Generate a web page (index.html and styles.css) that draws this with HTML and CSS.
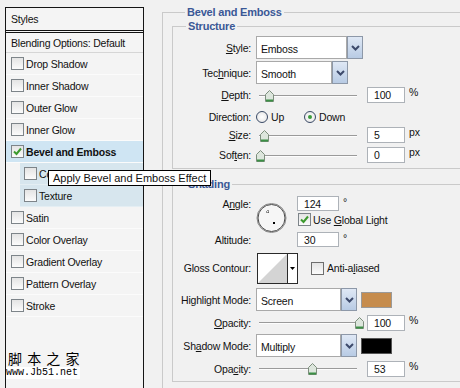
FILE: index.html
```html
<!DOCTYPE html>
<html lang="en">
<head>
    <meta charset="UTF-8">
    <title>Layer Style - Bevel and Emboss</title>
    <link rel="stylesheet" href="styles.css">
</head>
<body>
    <div class="dialog">
        <aside class="styles-panel">
            <div class="panel-head">Styles</div>
            <div class="panel-row blend">Blending Options: Default</div>
            <div class="panel-row"><span class="cb"></span>Drop Shadow</div>
            <div class="panel-row"><span class="cb"></span>Inner Shadow</div>
            <div class="panel-row"><span class="cb"></span>Outer Glow</div>
            <div class="panel-row"><span class="cb"></span>Inner Glow</div>
            <div class="panel-row active">
                <span class="cb"><svg width="11" height="11" viewBox="0 0 11 11"><path d="M2 5.5 L4.5 8 L9 2.5" fill="none" stroke="#3c9a2e" stroke-width="2"/></svg></span>
                <b>Bevel and Emboss</b>
            </div>
            <div class="panel-row sub"><span class="cb"></span>Contour</div>
            <div class="panel-row sub"><span class="cb"></span>Texture</div>
            <div class="panel-row"><span class="cb"></span>Satin</div>
            <div class="panel-row"><span class="cb"></span>Color Overlay</div>
            <div class="panel-row"><span class="cb"></span>Gradient Overlay</div>
            <div class="panel-row"><span class="cb"></span>Pattern Overlay</div>
            <div class="panel-row"><span class="cb"></span>Stroke</div>
        </aside>

        <main class="options">
            <fieldset class="group outer">
                <legend>Bevel and Emboss</legend>

                <fieldset class="group structure">
                    <legend>Structure</legend>

                    <div class="row tall">
                        <label class="lbl"><u>S</u>tyle:</label>
                        <div class="select w-style"><span class="sel-text">Emboss</span><span class="sel-btn"><svg width="9" height="6" viewBox="0 0 9 6"><path d="M1 1 L4.5 4.5 L8 1" fill="none" stroke="#3d4a6b" stroke-width="2"/></svg></span></div>
                    </div>
                    <div class="row tall">
                        <label class="lbl">Tec<u>h</u>nique:</label>
                        <div class="select w-tech"><span class="sel-text">Smooth</span><span class="sel-btn"><svg width="9" height="6" viewBox="0 0 9 6"><path d="M1 1 L4.5 4.5 L8 1" fill="none" stroke="#3d4a6b" stroke-width="2"/></svg></span></div>
                    </div>
                    <div class="row">
                        <label class="lbl"><u>D</u>epth:</label>
                        <div class="slider"><span class="track"></span><span class="thumb" style="left: 7px"><svg width="9" height="12" viewBox="0 0 9 12"><path d="M0.5 4.5 L4.5 0.5 L8.5 4.5 V11.5 H0.5 Z" fill="#dde6dd" stroke="#7d8e7d"/><path d="M1 10.5 H8" stroke="#3b8f45" stroke-width="2"/></svg></span></div>
                        <span class="num">100</span><span class="unit">%</span>
                    </div>
                    <div class="row dir">
                        <label class="lbl">Direction:</label>
                        <span class="radio"></span><span class="radio-text">Up</span>
                        <span class="radio on"></span><span class="radio-text">Down</span>
                    </div>
                    <div class="row">
                        <label class="lbl"><u>S</u>ize:</label>
                        <div class="slider"><span class="track"></span><span class="thumb" style="left: 2px"><svg width="9" height="12" viewBox="0 0 9 12"><path d="M0.5 4.5 L4.5 0.5 L8.5 4.5 V11.5 H0.5 Z" fill="#dde6dd" stroke="#7d8e7d"/><path d="M1 10.5 H8" stroke="#3b8f45" stroke-width="2"/></svg></span></div>
                        <span class="num">5</span><span class="unit">px</span>
                    </div>
                    <div class="row">
                        <label class="lbl">Sof<u>t</u>en:</label>
                        <div class="slider"><span class="track"></span><span class="thumb" style="left: -2px"><svg width="9" height="12" viewBox="0 0 9 12"><path d="M0.5 4.5 L4.5 0.5 L8.5 4.5 V11.5 H0.5 Z" fill="#dde6dd" stroke="#7d8e7d"/><path d="M1 10.5 H8" stroke="#3b8f45" stroke-width="2"/></svg></span></div>
                        <span class="num">0</span><span class="unit">px</span>
                    </div>
                </fieldset>

                <fieldset class="group shading">
                    <legend>Shading</legend>

                    <div class="angle-block">
                        <label class="lbl a-angle">A<u>n</u>gle:</label>
                        <div class="dial">
                            <svg width="32" height="31" viewBox="0 0 32 31">
                                <circle cx="15.5" cy="15" r="14.5" fill="#f6f6f6" stroke="#8a8a8a" stroke-width="1"/>
                                <circle cx="15.5" cy="15" r="13.5" fill="none" stroke="#4a4a4a" stroke-width="1"/>
                                <path d="M12 7 V11 M10 9 H14" stroke="#333" stroke-width="1" stroke-dasharray="1 1"/>
                                <rect x="17" y="19" width="2" height="2" fill="#000"/>
                            </svg>
                        </div>
                        <div class="a-val"><span class="num wide">124</span><span class="unit">°</span></div>
                        <div class="a-check"><span class="cb"><svg width="11" height="11" viewBox="0 0 11 11"><path d="M2 5.5 L4.5 8 L9 2.5" fill="none" stroke="#3c9a2e" stroke-width="2"/></svg></span><span>Use <u>G</u>lobal Light</span></div>
                        <label class="lbl a-alt">Altitude:</label>
                        <div class="a-alt-val"><span class="num wide">30</span><span class="unit">°</span></div>
                    </div>

                    <div class="row contour-row">
                        <label class="lbl">Gloss Contour:</label>
                        <div class="contour">
                            <svg width="41" height="31" viewBox="0 0 41 31">
                                <rect x="0.5" y="0.5" width="40" height="30" fill="#fff" stroke="#2a2a2a"/>
                                <polygon points="1,30 30,1 30,30" fill="#d4d4d4"/>
                                <path d="M30.5 1 V30" stroke="#2a2a2a"/>
                                <polygon points="33,14 38,14 35.5,17" fill="#000"/>
                            </svg>
                        </div>
                        <span class="cb light"></span><span class="cb-text">Anti-a<u>l</u>iased</span>
                    </div>
                    <div class="row tall highlight-row">
                        <label class="lbl">Hi<u>g</u>hlight Mode:</label>
                        <div class="select w-mode"><span class="sel-text">Screen</span><span class="sel-btn"><svg width="9" height="6" viewBox="0 0 9 6"><path d="M1 1 L4.5 4.5 L8 1" fill="none" stroke="#3d4a6b" stroke-width="2"/></svg></span></div>
                        <span class="swatch tan"></span>
                    </div>
                    <div class="row">
                        <label class="lbl"><u>O</u>pacity:</label>
                        <div class="slider"><span class="track"></span><span class="thumb" style="left: 97px"><svg width="9" height="12" viewBox="0 0 9 12"><path d="M0.5 4.5 L4.5 0.5 L8.5 4.5 V11.5 H0.5 Z" fill="#dde6dd" stroke="#7d8e7d"/><path d="M1 10.5 H8" stroke="#3b8f45" stroke-width="2"/></svg></span></div>
                        <span class="num">100</span><span class="unit">%</span>
                    </div>
                    <div class="row tall">
                        <label class="lbl">Sh<u>a</u>dow Mode:</label>
                        <div class="select w-mode"><span class="sel-text">Multiply</span><span class="sel-btn"><svg width="9" height="6" viewBox="0 0 9 6"><path d="M1 1 L4.5 4.5 L8 1" fill="none" stroke="#3d4a6b" stroke-width="2"/></svg></span></div>
                        <span class="swatch black"></span>
                    </div>
                    <div class="row">
                        <label class="lbl">Opa<u>c</u>ity:</label>
                        <div class="slider"><span class="track"></span><span class="thumb" style="left: 50px"><svg width="9" height="12" viewBox="0 0 9 12"><path d="M0.5 4.5 L4.5 0.5 L8.5 4.5 V11.5 H0.5 Z" fill="#dde6dd" stroke="#7d8e7d"/><path d="M1 10.5 H8" stroke="#3b8f45" stroke-width="2"/></svg></span></div>
                        <span class="num">53</span><span class="unit">%</span>
                    </div>
                </fieldset>
            </fieldset>
        </main>
    </div>

    <div class="tooltip">Apply Bevel and Emboss Effect</div>

    <div class="watermark">
        <div class="wm-cn">脚 本 之 家</div>
        <div class="wm-url">www.Jb51.net</div>
    </div>
</body>
</html>
```

FILE: styles.css
```css
body {
    margin: 0;
    width: 460px;
    height: 388px;
    overflow: hidden;
    background-color: #f1f1f1;
    font-family: "Liberation Sans", Arial, sans-serif;
    font-size: 10.5px;
    letter-spacing: -0.2px;
    color: #111;
    position: relative;
}

.dialog {
    display: flex;
    height: 388px;
}

/* left list of styles */
.styles-panel {
    flex-shrink: 0;
    box-sizing: border-box;
    width: 139px;
    margin: 7px 0 0 5px;
    border: 1px solid #151515;
    border-bottom: 0;
    background-color: #f4f4f4;
}

.panel-head {
    height: 22px;
    line-height: 22px;
    padding-left: 5px;
    border-bottom: 3px double #111;
}

.panel-row {
    box-sizing: border-box;
    height: 22px;
    display: flex;
    align-items: center;
    padding-left: 5px;
    border-bottom: 1px solid #fbfbfb;
}

.panel-row.blend {
    height: 20px;
    border-bottom: 1px solid #d6d6d6;
}

.panel-row.active {
    background-color: #cfe5f3;
}

.panel-row.sub {
    margin-left: 14px;
    padding-left: 4px;
    background-color: #d7e6ee;
    border-bottom-color: #e4eef3;
}

.cb {
    box-sizing: border-box;
    width: 13px;
    height: 13px;
    margin-right: 2px;
    border: 1px solid #7d8489;
    background: linear-gradient(#e4e4e4, #fbfbfb);
    display: flex;
    align-items: center;
    justify-content: center;
    flex-shrink: 0;
}

.cb.light {
    border-color: #6e6e6e;
    margin-left: 13px;
}

/* right side groups */
.options {
    padding: 5px 0 0 18px;
    flex: 1;
}

.group {
    margin: 0;
    border: 1px solid #cacaca;
    border-right: 0;
}

.group legend {
    margin-left: 13px;
    padding: 0 2px;
    line-height: 14px;
    font-size: 11px;
    font-weight: bold;
    color: #3a5896;
}

.outer {
    width: 320px;
    height: 420px;
    padding: 0 0 0 9px;
    border-bottom: 0;
}

.structure {
    padding: 3px 0 4px 0;
    display: flex;
    flex-direction: column;
    gap: 2px;
}

.shading {
    margin-top: 8px;
    padding: 5px 0 4px 0;
    display: flex;
    flex-direction: column;
}

.row {
    box-sizing: border-box;
    height: 18px;
    display: flex;
    align-items: center;
}

.row.tall {
    height: 23px;
}

.row.dir {
    padding-top: 3px;
}

.lbl {
    width: 78px;
    margin-right: 5px;
    text-align: right;
    white-space: nowrap;
    flex-shrink: 0;
}

/* dropdowns */
.select {
    display: flex;
    height: 23px;
}

.sel-text {
    flex: 1;
    box-sizing: border-box;
    padding: 3px 0 0 4px;
    display: flex;
    align-items: center;
    background-color: #fff;
    border: 1px solid #a9a9a9;
}

.sel-btn {
    box-sizing: border-box;
    width: 16px;
    border: 1px solid #8d98a8;
    background: linear-gradient(#dfe8f5, #b8cbe4);
    display: flex;
    align-items: center;
    justify-content: center;
}

.w-style { width: 107px; }
.w-tech { width: 92px; }
.w-mode { width: 101px; }

/* sliders */
.slider {
    position: relative;
    width: 104px;
    height: 17px;
    margin-left: 2px;
}

.track {
    position: absolute;
    left: 1px;
    right: 5px;
    top: 8px;
    height: 1px;
    background-color: #9a9a9a;
    border-bottom: 1px solid #fdfdfd;
}

.thumb {
    position: absolute;
    top: 3px;
    width: 9px;
    height: 12px;
}

.thumb svg {
    display: block;
}

.num {
    box-sizing: border-box;
    width: 38px;
    height: 16px;
    margin-left: 5px;
    padding-left: 6px;
    background-color: #fff;
    border: 1px solid #adb2b8;
    display: flex;
    align-items: center;
}

.num.wide {
    width: 42px;
    height: 15px;
    margin-left: 0;
}

.unit {
    margin-left: 4px;
    align-self: flex-start;
    line-height: 13px;
}

/* radios */
.radio {
    box-sizing: border-box;
    width: 12px;
    height: 12px;
    border-radius: 50%;
    border: 1px solid #3a4a66;
    background: radial-gradient(#ffffff, #e2e2e2);
    display: flex;
    align-items: center;
    justify-content: center;
}

.radio.on::after {
    content: "";
    width: 4px;
    height: 4px;
    border-radius: 50%;
    background-color: #3a9a3a;
}

.radio-text {
    margin: 0 20px 0 3px;
}

/* angle and altitude */
.angle-block {
    display: grid;
    grid-template-columns: 78px 36px auto;
    grid-template-rows: 15px 17px 15px;
    column-gap: 5px;
    row-gap: 2px;
    align-items: center;
}

.a-angle { grid-column: 1; grid-row: 1; margin: 0; }
.a-alt { grid-column: 1; grid-row: 3; margin: 0; }

.dial {
    grid-column: 2;
    grid-row: 1 / 4;
    align-self: start;
    margin-top: 7px;
}

.dial svg {
    display: block;
}

.a-val,
.a-alt-val {
    grid-column: 3;
    display: flex;
    align-items: center;
}

.a-val { grid-row: 1; }
.a-alt-val { grid-row: 3; }

.a-check {
    grid-column: 3;
    grid-row: 2;
    align-self: start;
    display: flex;
    align-items: center;
    margin-left: 1px;
}

/* contour and colours */
.shading .row {
    height: 17px;
    margin-top: 3px;
}

.shading .row.tall {
    height: 23px;
}

.shading .contour-row {
    height: 30px;
    margin-top: 6px;
}

.shading .highlight-row {
    margin-top: 5px;
}

.contour {
    margin-left: 1px;
}

.contour svg {
    display: block;
}

.cb-text {
    margin-left: 1px;
}

.swatch {
    width: 31px;
    height: 16px;
    margin-left: 4px;
    box-sizing: border-box;
    border: 1px solid #9a9a9a;
}

.swatch.tan { background-color: #c68c4d; }
.swatch.black { background-color: #000; border-color: #555; }

/* floating bits */
.tooltip {
    position: absolute;
    left: 48px;
    top: 170px;
    box-sizing: border-box;
    height: 16px;
    padding: 0 4px;
    line-height: 14px;
    font-size: 11px;
    letter-spacing: 0;
    background-color: #fff;
    border: 1px solid #000;
    white-space: nowrap;
}

.watermark {
    position: absolute;
    left: 6px;
    top: 349px;
    letter-spacing: 0;
}

.wm-cn {
    padding-left: 2px;
    font-family: "Noto Sans CJK SC", sans-serif;
    font-size: 14px;
    letter-spacing: 1px;
    line-height: 18px;
    color: #000;
}

.wm-url {
    font-family: "Liberation Mono", monospace;
    font-size: 10px;
    line-height: 12px;
    background-color: #fff;
    color: #000;
}
```
